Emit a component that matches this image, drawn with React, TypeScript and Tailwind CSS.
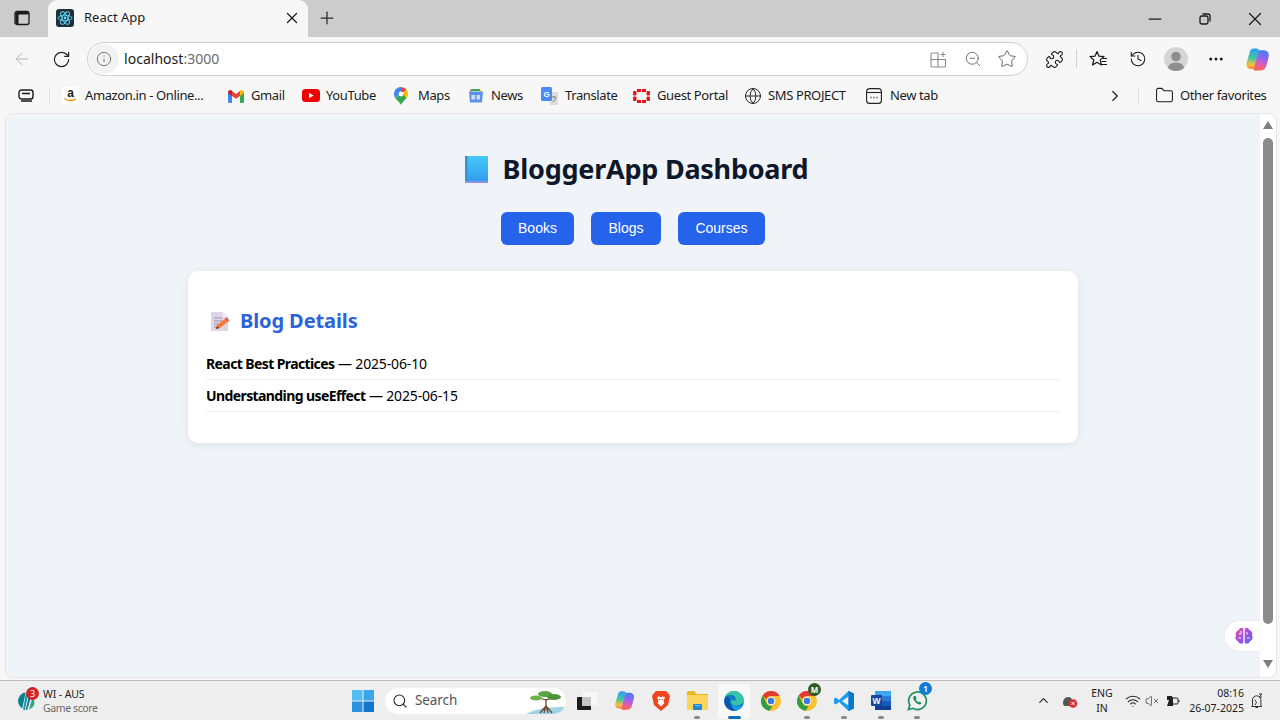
import { ChevronRight, ChevronUp, Folder, Globe, History, Info, Minus, MoreHorizontal, Plus, Puzzle, RotateCw, Search, Star, VolumeX, Wifi, X, ZoomOut, ArrowLeft } from 'lucide-react';
import type { ReactNode } from 'react';

const ui = "font-['Noto_Sans','Open_Sans',sans-serif]";

// ---- small logos, hand drawn
function ReactLogo() {
  return (
    <svg width="18" height="18" viewBox="0 0 18 18">
      <rect width="18" height="18" rx="3" fill="#20303a" />
      <g fill="none" stroke="#61dafb" strokeWidth="0.9">
        <ellipse cx="9" cy="9" rx="7" ry="2.8" />
        <ellipse cx="9" cy="9" rx="7" ry="2.8" transform="rotate(60 9 9)" />
        <ellipse cx="9" cy="9" rx="7" ry="2.8" transform="rotate(120 9 9)" />
      </g>
      <circle cx="9" cy="9" r="1.4" fill="#61dafb" />
    </svg>
  );
}

function AmazonIcon() {
  return (
    <svg width="17" height="17" viewBox="0 0 17 17">
      <rect width="17" height="17" rx="2" fill="#fff" />
      <text x="8.5" y="10" textAnchor="middle" fontSize="12" fontWeight="700" fontFamily="Liberation Sans" fill="#222">a</text>
      <path d="M2.5 11.5 Q8 15.5 14 11.8" stroke="#f59e0b" strokeWidth="1.5" fill="none" />
    </svg>
  );
}

function GmailIcon() {
  return (
    <svg width="16" height="14" viewBox="0 0 16 14">
      <path d="M0 3v9.5A1.5 1.5 0 0 0 1.5 14H4V6z" fill="#4285f4" />
      <path d="M16 3v9.5a1.5 1.5 0 0 1-1.5 1.5H12V6z" fill="#34a853" />
      <path d="M4 7 8 9.8 12 7V2L8 5 4 2z" fill="#ea4335" />
      <path d="M0 3.2C0 1 2.4.3 4 1.5V7L0 4z" fill="#c5221f" />
      <path d="M16 3.2C16 1 13.6.3 12 1.5V7l4-3z" fill="#fbbc04" />
    </svg>
  );
}

function YoutubeIcon() {
  return (
    <svg width="18" height="13" viewBox="0 0 18 13">
      <rect width="18" height="13" rx="3.5" fill="#f00000" />
      <path d="M7 3.8v5.4l4.6-2.7z" fill="#fff" />
    </svg>
  );
}

function MapsIcon() {
  return (
    <svg width="14" height="18" viewBox="0 0 14 18">
      <path d="M7 0a7 7 0 0 0-5.4 11.4L7 5z" fill="#4285f4" />
      <path d="M7 0a7 7 0 0 1 5.4 2.6L7 8z" fill="#ea4335" />
      <path d="M12.4 2.6A7 7 0 0 1 12.6 11L7 8z" fill="#fbbc04" />
      <path d="M1.6 11.4 7 5.5l5.6 5.5C10.5 13.5 8 15.5 7 18c-1-2.5-3.4-4.2-5.4-6.6z" fill="#34a853" />
      <circle cx="7" cy="7" r="2.4" fill="#fff" />
    </svg>
  );
}

function NewsIcon() {
  return (
    <svg width="16" height="15" viewBox="0 0 16 15">
      <path d="M3 3V1h9v2z" fill="#34a853" />
      <path d="M12 3V1.5l2 2z" fill="#fbbc04" />
      <path d="M3 3.500V1.500L1.500 3.500z" fill="#ea4335" />
      <path d="M1 3.5h14l-1 11H2z" fill="#5b92e8" />
      <rect x="3.5" y="7" width="3.5" height="4.5" fill="#fff" opacity="0.7" />
      <rect x="8.5" y="7" width="3.5" height="4.5" fill="#fff" opacity="0.7" />
    </svg>
  );
}

function TranslateIcon() {
  return (
    <svg width="17" height="18" viewBox="0 0 17 18">
      <path d="M7 5h9a1 1 0 0 1 1 1v11a1 1 0 0 1-1 1H9z" fill="#dcdcdc" />
      <rect width="11" height="14" rx="1.5" fill="#4c8bf5" />
      <text x="5.5" y="9.5" textAnchor="middle" fontSize="8" fontWeight="700" fontFamily="Liberation Sans" fill="#fff">G</text>
      <path d="M11 10h4M13 9v1M11.5 15c2-1 3-3 3-5" stroke="#777" strokeWidth="0.9" fill="none" />
    </svg>
  );
}

function GuestIcon() {
  return (
    <svg width="17" height="14" viewBox="0 0 17 14" fill="#e3161b">
      <rect x="4" y="0" width="4" height="3" />
      <rect x="9" y="0" width="4" height="3" />
      <rect x="4" y="11" width="4" height="3" />
      <rect x="9" y="11" width="4" height="3" />
      <rect x="0" y="2" width="3.500" height="4.500" rx="1" />
      <rect x="13.500" y="2" width="3.500" height="4.500" rx="1" />
      <rect x="0" y="7.500" width="3.500" height="4.500" rx="1" />
      <rect x="13.500" y="7.500" width="3.500" height="4.500" rx="1" />
    </svg>
  );
}

function NewTabIcon() {
  return (
    <svg width="16" height="16" viewBox="0 0 16 16" fill="none" stroke="#222" strokeWidth="1.1">
      <rect x="0.6" y="0.6" width="14.8" height="14.8" rx="3" />
      <path d="M1 4.5h14" />
      <path d="M4.5 9.5h1M7.5 9.5h1M10.5 9.5h1" strokeWidth="1.6" />
    </svg>
  );
}

function CopilotIcon({ size = 25, id }: { size?: number; id: string }) {
  return (
    <svg width={size} height={size} viewBox="0 0 24 24">
      <defs>
        <linearGradient id={`${id}L`} x1="0.5" y1="0" x2="0.4" y2="1">
          <stop offset="0" stopColor="#2f9df0" />
          <stop offset="0.45" stopColor="#3cc8a8" />
          <stop offset="0.8" stopColor="#f5c33b" />
          <stop offset="1" stopColor="#f58a3a" />
        </linearGradient>
        <linearGradient id={`${id}R`} x1="0.6" y1="0" x2="0.4" y2="1">
          <stop offset="0" stopColor="#3f7ff2" />
          <stop offset="0.45" stopColor="#a160ea" />
          <stop offset="0.8" stopColor="#ee5f95" />
          <stop offset="1" stopColor="#f4664a" />
        </linearGradient>
      </defs>
      <path d="M8.500 1.500C6 1.500 5 3 4.500 5L1.500 15C.6 18.500 3 21 6 21h2.500L13.500 4C13.800 2.600 12.500 1.500 11 1.500z" fill={`url(#${id}L)`} />
      <path d="M14.500 3h3.500c3.500 0 5.500 3 4.700 6.500L20.500 18c-.7 3-3 4.500-5.500 4.500H9.500c-1 0-1.500-.7-1.200-1.700L13 4.500c.2-.9.700-1.500 1.500-1.500z" fill={`url(#${id}R)`} />
    </svg>
  );
}

// tab window icon, top left
function TabsIcon() {
  return (
    <svg width="16" height="16" viewBox="0 0 16 16" fill="none" stroke="#1a1a1a">
      <rect x="1" y="1.500" width="14" height="13" rx="2" strokeWidth="1.300" />
      <path d="M1.500 3.500a1.500 1.500 0 0 1 1.500-1.500h10a1.500 1.500 0 0 1 1.500 1.500v1H4.500v9.500H3a1.500 1.500 0 0 1-1.500-1.500z" fill="#1a1a1a" stroke="none" />
    </svg>
  );
}

function AppsIcon() {
  return (
    <svg width="17" height="17" viewBox="0 0 17 17" fill="none" stroke="#8a8a8a" strokeWidth="1.100">
      <path d="M1 3.500A1.500 1.500 0 0 1 2.500 2H8v6.500H1zM8 8.500h7.500V15a1 1 0 0 1-1 1H8zM1 8.500h7V16H2.500A1.500 1.500 0 0 1 1 14.500z" />
      <path d="M13 1v5M10.500 3.500h5" />
    </svg>
  );
}

function FavListIcon() {
  return (
    <svg width="19" height="18" viewBox="0 0 19 18" fill="none" stroke="#1a1a1a" strokeWidth="1.200" strokeLinejoin="round">
      <path d="M8 1.500 10 6.200l5 .4-3.800 3.300 1.200 5L8 12.300 3.600 15l1.200-5L1 6.600l5-.4z" />
      <path d="M13 8.500h5M12.500 11.500h5M13 14.500h5" />
    </svg>
  );
}

function Avatar() {
  return (
    <div className="w-6 h-6 rounded-full bg-[#d5d5d5] overflow-hidden">
      <svg width="24" height="24" viewBox="0 0 24 24" fill="#8e8e8e">
        <circle cx="12" cy="9.500" r="4.800" />
        <ellipse cx="12" cy="21" rx="8" ry="5.500" />
      </svg>
    </div>
  );
}

// ---- page emoji
function BookEmoji() {
  return (
    <svg width="23" height="27" viewBox="0 0 23 27">
      <defs>
        <linearGradient id="bookBlue" x1="0" y1="0" x2="0" y2="1">
          <stop offset="0" stopColor="#45c8f2" />
          <stop offset="1" stopColor="#3399f0" />
        </linearGradient>
      </defs>
      <rect x="0" y="0" width="23" height="27" rx="1" fill="url(#bookBlue)" />
      <rect x="0" y="0" width="2.500" height="27" fill="#3d8fd0" />
      <rect x="0" y="25" width="23" height="2" fill="#8e93de" />
    </svg>
  );
}

function MemoEmoji() {
  return (
    <svg width="20" height="21" viewBox="0 0 20 21">
      <path d="M1 1h12l5 5v14H1z" fill="#ddd6e6" />
      <path d="M13 1l5 5h-5z" fill="#f3eef7" />
      <path d="M4 7h8M4 10h10M4 13h7M4 16h4" stroke="#9a92a8" strokeWidth="1" />
      <path d="M6 18l1-4 9-7 3 3-9 7z" fill="#f47b3f" />
      <path d="M6 18l1-3 2 2z" fill="#4a3a35" />
      <path d="M15 7.500l1.500-1.200 3 3-1.500 1.200z" fill="#e25560" />
    </svg>
  );
}

function BrainIcon() {
  return (
    <svg width="20" height="20" viewBox="0 0 20 20">
      <defs>
        <linearGradient id="brainFill" x1="0" y1="0" x2="1" y2="1">
          <stop offset="0" stopColor="#f0569a" />
          <stop offset="0.5" stopColor="#a24fe8" />
          <stop offset="1" stopColor="#4f6ef0" />
        </linearGradient>
      </defs>
      <path d="M9.300 2.500C7.500 1 5 2 5 4 2.500 4.500 1 7 2 9.500.700 11.500 1.500 14.500 4 15c.3 2.500 3.500 3.500 5.300 1.800zM10.700 2.500C12.500 1 15 2 15 4c2.500.5 4 3 3 5.500 1.300 2 .5 5-2 5.500-.3 2.500-3.500 3.500-5.300 1.800z" fill="url(#brainFill)" />
      <path d="M5 8h2.500M4.500 12H7M13 6v2.500M15.500 12H13M7 5v2" stroke="#fff" strokeWidth="1" fill="none" />
    </svg>
  );
}

// ---- taskbar icons
function WinLogo() {
  return (
    <svg width="22" height="22" viewBox="0 0 22 22">
      <rect x="0" y="0" width="10.500" height="10.500" fill="#52bdf2" />
      <rect x="11.500" y="0" width="10.500" height="10.500" fill="#3aa6ea" />
      <rect x="0" y="11.500" width="10.500" height="10.500" fill="#2a92e0" />
      <rect x="11.500" y="11.500" width="10.500" height="10.500" fill="#1277cc" />
    </svg>
  );
}

function TreeArt() {
  return (
    <svg width="40" height="24" viewBox="0 0 40 24">
      <path d="M0 24 Q14 16 40 17 L34 24z" fill="#9fd3e6" />
      <path d="M20 9v7M20 16l-6 7M20 16l6 7M20 15l-2 8M20 15l2 8M20 10l-7-2M20 10l7-2" stroke="#6b4a2f" strokeWidth="1.300" fill="none" />
      <ellipse cx="19" cy="4" rx="7" ry="3" fill="#5aa33f" />
      <ellipse cx="10" cy="8" rx="6" ry="2.500" fill="#6fb24a" />
      <ellipse cx="28" cy="7" rx="7" ry="3" fill="#4c9438" />
    </svg>
  );
}

function TaskViewIcon() {
  return (
    <svg width="22" height="20" viewBox="0 0 22 20">
      <rect x="7" y="1" width="14" height="13" rx="1" fill="#f8f8f8" />
      <rect x="1" y="6" width="14" height="13" rx="1" fill="#c4c4c4" />
      <path d="M1 7a1 1 0 0 1 1-1h4v9h9v4H2a1 1 0 0 1-1-1z" fill="#1c1c1c" />
    </svg>
  );
}

function BraveIcon() {
  return (
    <svg width="18" height="21" viewBox="0 0 18 21">
      <path d="M4 1h10l2 2 2 3-2 9-7 6-7-6-2-9 2-3z" fill="#f0441e" />
      <path d="M5 7l2.500-.5L9 7.500 10.500 6.500 13 7l-1.500 4 1 2L9 16.500 5.500 13l1-2z" fill="#fff" />
      <path d="M7 9.500h1.300M9.700 9.500H11" stroke="#f0441e" strokeWidth="1" />
    </svg>
  );
}

function ExplorerIcon() {
  return (
    <svg width="21" height="19" viewBox="0 0 21 19">
      <path d="M0 1.500A1.500 1.500 0 0 1 1.500 0h6l2 3H21v14H0z" fill="#e8b923" />
      <rect x="0" y="4" width="21" height="15" rx="1" fill="#fbd45c" />
      <rect x="6" y="13" width="9" height="6" rx="1" fill="#1e88d4" />
      <rect x="8" y="14" width="5" height="1.200" fill="#fff" opacity="0.4" />
    </svg>
  );
}

function EdgeIcon() {
  return (
    <svg width="20" height="20" viewBox="0 0 20 20">
      <circle cx="10" cy="10" r="10" fill="#0f7ec9" />
      <path d="M19.800 10.500C19.800 5 15.500 0 10 0 5 0 1.500 3.500.5 7c2-3 5.500-3.800 8-3 3 1 4 3.500 3 5.500H6.500c0 3 3 5 6 5 2.500 0 5-1 7.300-4z" fill="#36c5a6" />
      <path d="M6 9.500c-.5 4 2 9 8 9.300-2 1-4 1.300-6 .8C4 19 .5 15 .5 10c0-1 0-2 .5-3 2-2 4.500-1.500 5 2.500z" fill="#0a58a8" />
      <path d="M12 19.800c3.500-.8 6-3.300 7.300-6-2 1.500-5 2-7 1.500-1.500-.5-3-1.300-4-2.800-.5 3 1 6 3.700 7.300z" fill="#1e9be0" />
    </svg>
  );
}

function ChromeIcon() {
  return (
    <svg width="20" height="20" viewBox="0 0 20 20">
      <circle cx="10" cy="10" r="10" fill="#fbc02d" />
      <path d="M10 0a10 10 0 0 1 8.700 5H10a5 5 0 0 0-4.700 3.300L1.800 4.300A10 10 0 0 1 10 0z" fill="#e33b2e" />
      <path d="M1.800 4.300 5.700 12.500a5 5 0 0 0 6 2.200L8.300 19.900A10 10 0 0 1 1.800 4.300z" fill="#2f9e44" />
      <circle cx="10" cy="10" r="4.300" fill="#fff" />
      <circle cx="10" cy="10" r="3.300" fill="#3b78e7" />
    </svg>
  );
}

function VsCodeIcon() {
  return (
    <svg width="20" height="20" viewBox="0 0 20 20">
      <path d="M14.500 0 20 2.500v15L14.500 20 5 11l-3 2.500L0 12.300V7.700L2 6.500 5 9z" fill="#1f9cf0" />
      <path d="M14.500 5.500 8 10l6.500 4.500z" fill="#f0f0f0" />
      <path d="M14.500 0 20 2.500v15L14.500 20z" fill="#0a78c8" />
    </svg>
  );
}

function WordIcon() {
  return (
    <svg width="20" height="19" viewBox="0 0 20 19">
      <rect x="4" y="0" width="16" height="19" rx="1" fill="#2b7cd3" />
      <rect x="4" y="0" width="16" height="5" fill="#41a5ee" />
      <rect x="4" y="10" width="16" height="5" fill="#185abd" />
      <rect x="4" y="15" width="16" height="4" fill="#103f91" />
      <rect x="0" y="4" width="11" height="11" rx="1" fill="#124a9e" />
      <text x="5.500" y="12.500" textAnchor="middle" fontSize="8.500" fontWeight="700" fontFamily="Liberation Sans" fill="#fff">W</text>
    </svg>
  );
}

function WhatsappIcon() {
  return (
    <svg width="21" height="21" viewBox="0 0 21 21" fill="none">
      <path d="M1.500 19.500l1.300-4.500A8.800 8.800 0 1 1 6 18.300z" stroke="#1f8f5f" strokeWidth="1.700" fill="#f0f0f0" />
      <path d="M7 6c-1 1-1 2.500 0 4.300 1 1.800 2.800 3.500 4.700 4 1.300.3 2.400-.2 3-1.300l-2.200-1.500-1 .8c-1-.4-2.200-1.600-2.700-2.800l.9-1L8.500 6z" fill="#1f8f5f" />
    </svg>
  );
}

function CricketIcon() {
  return (
    <svg width="17" height="20" viewBox="0 0 20 25" preserveAspectRatio="none">
      <path d="M0 12C1 6 5 2 9 2L5 22C2 20 0 16 0 12z" fill="#0d7f8f" />
      <path d="M9 4h3L8 24 6 23z" fill="#12a0a6" />
      <path d="M13 5h3l-5 18-2 1z" fill="#1a6fa8" />
      <path d="M17 8c2 3 3 6 2 9-1 3-3 5-6 6z" fill="#2aa878" />
    </svg>
  );
}

function TrayCloud() {
  return (
    <svg width="16" height="14" viewBox="0 0 16 14">
      <path d="M1 9c0-3 2-6 5-6 2 0 4 1 4 3l2 2-2 4H3C2 12 1 11 1 9z" fill="#555" />
      <circle cx="11" cy="9.500" r="4.300" fill="#e0303a" />
      <path d="M9.500 8l3 3M12.500 8l-3 3" stroke="#fff" strokeWidth="1" />
    </svg>
  );
}

function TrayBattery() {
  return (
    <svg width="16" height="14" viewBox="0 0 16 14" fill="#222">
      <path d="M3 2h5v1h1v9H3z" />
      <path d="M9 4h4a1 1 0 0 1 1 1v4a1 1 0 0 1-1 1H9" stroke="#222" fill="none" />
      <path d="M14.500 6h1v2h-1z" />
      <path d="M1 6h4L3 12z" fill="#eee" />
    </svg>
  );
}

function TrayBell() {
  return (
    <svg width="16" height="16" viewBox="0 0 16 16" fill="none" stroke="#333" strokeWidth="1">
      <path d="M3.500 12.500V7a4.200 4.200 0 0 1 8.400 0v5.500l1.100 1H2.500z" />
      <path d="M6.500 14.500h2.500M6 7l1.500 2.500L6 12M10 1h3l-3 3h3" />
    </svg>
  );
}

const bookmarks: { icon: ReactNode; label: string; box: string; icoBox: string }[] = [
  { icon: <AmazonIcon />, label: 'Amazon.in - Online...', box: 'w-[166px]', icoBox: 'w-[23px]' },
  { icon: <GmailIcon />, label: 'Gmail', box: 'w-[74px]', icoBox: 'w-[23px]' },
  { icon: <YoutubeIcon />, label: 'YouTube', box: 'w-[92px]', icoBox: 'w-[24px]' },
  { icon: <MapsIcon />, label: 'Maps', box: 'w-[74px]', icoBox: 'w-[24px]' },
  { icon: <NewsIcon />, label: 'News', box: 'w-[73px]', icoBox: 'w-[23px]' },
  { icon: <TranslateIcon />, label: 'Translate', box: 'w-[92px]', icoBox: 'w-[24px]' },
  { icon: <GuestIcon />, label: 'Guest Portal', box: 'w-[111px]', icoBox: 'w-[24px]' },
  { icon: <Globe size={18} strokeWidth={1.3} color="#222" />, label: 'SMS PROJECT', box: 'w-[122px]', icoBox: 'w-[24px]' },
  { icon: <NewTabIcon />, label: 'New tab', box: 'w-[100px]', icoBox: 'w-[24px]' },
];

const taskIcons: { icon: ReactNode; key: string; running?: boolean; active?: boolean; badge?: ReactNode }[] = [
  { key: 'view', icon: <TaskViewIcon /> },
  { key: 'copilot', icon: <CopilotIcon size={21} id="copilotTask" /> },
  { key: 'brave', icon: <BraveIcon /> },
  { key: 'files', icon: <ExplorerIcon />, running: true },
  { key: 'edge', icon: <EdgeIcon />, active: true },
  { key: 'chrome', icon: <ChromeIcon /> },
  {
    key: 'chrome2',
    icon: <ChromeIcon />,
    running: true,
    badge: <span className="absolute top-[2px] left-[19px] w-[13px] h-[13px] rounded-full bg-[#2c5c22] text-white text-[8px] leading-[13px] text-center font-bold">M</span>,
  },
  { key: 'code', icon: <VsCodeIcon />, running: true },
  { key: 'word', icon: <WordIcon />, running: true },
  {
    key: 'whatsapp',
    icon: <WhatsappIcon />,
    running: true,
    badge: <span className="absolute top-[1px] left-[20px] w-[13px] h-[13px] rounded-full bg-[#0f7cd6] text-white text-[9px] leading-[13px] text-center font-semibold">1</span>,
  },
];

function TitleBar() {
  return (
    <div className="h-[37px] bg-[#cccccc] flex items-center shrink-0">
      <div className="w-[48px] flex justify-center pr-[4px] mb-[2px]">
        <TabsIcon />
      </div>
      <div className="w-[260px] h-[37px] bg-[#f7f7f7] rounded-t-[9px] flex items-center pl-[8px] pr-[7px] pb-[1px]">
        <ReactLogo />
        <span className="ml-[10px] text-[13px] text-[#1c1c1c] flex-1">React App</span>
        <X size={18} strokeWidth={1.7} color="#1a1a1a" />
      </div>
      <div className="ml-[9px] mb-[2px]">
        <Plus size={20} strokeWidth={1.5} color="#2a2a2a" />
      </div>
      <div className="ml-auto flex items-center">
        <div className="w-[50px] flex justify-center"><Minus size={20} strokeWidth={1.5} color="#1a1a1a" /></div>
        <div className="w-[50px] flex justify-center">
          <svg width="12" height="12" viewBox="0 0 12 12" fill="none" stroke="#1a1a1a" strokeWidth="1.300">
            <rect x="1" y="3" width="8" height="8" rx="1.800" />
            <path d="M3.500 1H9a2 2 0 0 1 2 2v5.500" />
          </svg>
        </div>
        <div className="w-[50px] flex justify-center"><X size={22} strokeWidth={1.4} color="#1a1a1a" /></div>
      </div>
    </div>
  );
}

function AddressBar() {
  return (
    <div className="h-[41px] pt-[3px] bg-[#f7f7f7] flex items-center shrink-0">
      <div className="w-[43px] flex justify-center pl-[1px]">
        <ArrowLeft size={20} strokeWidth={1.2} color="#b5b5b5" />
      </div>
      <div className="w-[36px] flex justify-center">
        <RotateCw size={19} strokeWidth={1.5} color="#222" />
      </div>
      <div className="ml-[8px] w-[941px] h-[34px] bg-white border border-[#cfcfcf] rounded-full flex items-center pl-[1px] pr-[10px]">
        <div className="w-[30px] h-[30px] rounded-full bg-[#f2f2f2] flex items-center justify-center">
          <Info size={16} strokeWidth={1.3} color="#666" />
        </div>
        <span className="ml-[5px] mb-[2px] text-[14px] text-[#1a1a1a] flex-1 tracking-[0.03px]">
          localhost<span className="text-[#6b6b6b]">:3000</span>
        </span>
        <AppsIcon />
        <div className="ml-[17px]"><ZoomOut size={18} strokeWidth={1.2} color="#666" /></div>
        <div className="ml-[15px]"><Star size={20} strokeWidth={1.2} color="#666" /></div>
      </div>
      <div className="ml-[17px]"><Puzzle size={19} strokeWidth={1.4} color="#1a1a1a" /></div>
      <div className="ml-[12px] w-px h-[18px] bg-[#d0d0d0]" />
      <div className="ml-[12px]"><FavListIcon /></div>
      <div className="ml-[21px]"><History size={18} strokeWidth={1.4} color="#1a1a1a" /></div>
      <div className="ml-[17px]"><Avatar /></div>
      <div className="ml-[19px]"><MoreHorizontal size={18} strokeWidth={2} color="#1a1a1a" /></div>
      <div className="ml-[20px]"><CopilotIcon id="copilotTop" /></div>
    </div>
  );
}

function BookmarksBar() {
  return (
    <div className="h-[35px] bg-[#f7f7f7] flex items-center shrink-0 text-[13px] text-[#1c1c1c] tracking-[-0.38px]">
      <div className="w-[49px] pl-[18px] flex items-center">
        <svg width="17" height="13" viewBox="0 0 17 13" fill="none" stroke="#1a1a1a" strokeWidth="1.400">
          <rect x="1" y="1" width="14" height="9" rx="2.500" />
          <path d="M4 4.500h8M3 12h11" />
        </svg>
      </div>
      <div className="w-px h-[18px] bg-[#dedede] mr-[12px]" />
      {bookmarks.map((b) => (
        <div key={b.label} className={`${b.box} flex items-center shrink-0`}>
          <div className={`${b.icoBox} flex items-center shrink-0`}>{b.icon}</div>
          <span className="whitespace-nowrap">{b.label}</span>
        </div>
      ))}
      <div className="ml-[140px]"><ChevronRight size={18} strokeWidth={1.5} color="#1a1a1a" /></div>
      <div className="ml-[14px] w-px h-[18px] bg-[#dedede]" />
      <div className="ml-[16px]"><Folder size={19} strokeWidth={1.3} color="#1a1a1a" /></div>
      <span className="ml-[6px] whitespace-nowrap">Other favorites</span>
    </div>
  );
}

function Scrollbar() {
  return (
    <div className="w-[16px] bg-white flex flex-col items-center shrink-0 rounded-r-[8px]">
      <div className="mt-[7px] w-0 h-0 border-l-[5px] border-r-[5px] border-b-[8px] border-l-transparent border-r-transparent border-b-[#7e7e7e]" />
      <div className="mt-[9px] w-[10px] h-[486px] rounded-full bg-[#8b8b8b]" />
      <div className="mt-auto mb-[9px] w-0 h-0 border-l-[5px] border-r-[5px] border-t-[8px] border-l-transparent border-r-transparent border-t-[#7e7e7e]" />
    </div>
  );
}

function Dashboard() {
  return (
    <div className="flex-1 bg-[#f0f4f8] relative rounded-l-[8px]">
      <div className="pt-[35px] flex flex-col items-center">
        <h1 className="h-[40px] pl-[7px] flex items-center text-[27px] font-bold text-[#0f172a] tracking-[-0.25px]">
          <BookEmoji />
          <span className="ml-[15px]">BloggerApp Dashboard</span>
        </h1>
        <div className="mt-[23px] flex gap-[17px] font-['Liberation_Sans',Arial,sans-serif] text-[14px] text-white">
          <button className="w-[73px] h-[33px] bg-[#2563eb] rounded-[6px]">Books</button>
          <button className="w-[70px] h-[33px] bg-[#2563eb] rounded-[6px]">Blogs</button>
          <button className="w-[87px] h-[33px] bg-[#2563eb] rounded-[6px]">Courses</button>
        </div>
        <div className="mt-[26px] w-[890px] h-[172px] bg-white rounded-[10px] shadow-[0_2px_8px_rgba(0,0,0,0.08)] px-[18px] pt-[36px]">
          <h2 className="flex items-center h-[28px] text-[20px] font-bold text-[#2b63dc] tracking-[-0.1px]">
            <span className="ml-[4px] mr-[10px] flex"><MemoEmoji /></span>
            Blog Details
          </h2>
          <ul className="mt-[15px] text-[14px] text-black tracking-[-0.15px]">
            <li className="h-[30px] pt-[1px] leading-[26px] border-b border-[#f0f0f0]">
              <strong className="font-bold tracking-[-0.6px]">React Best Practices</strong> — 2025-06-10
            </li>
            <li className="h-[32px] leading-[32px] border-b border-[#f0f0f0]">
              <strong className="font-bold tracking-[-0.6px]">Understanding useEffect</strong> — 2025-06-15
            </li>
          </ul>
        </div>
      </div>
      <div className="absolute right-0 top-[507px] w-[35px] h-[30px] bg-white rounded-l-full flex items-center justify-center pl-[2px] shadow-[0_0_4px_rgba(0,0,0,0.05)]">
        <BrainIcon />
      </div>
    </div>
  );
}

function Taskbar() {
  return (
    <div className="h-[40px] bg-[#eeeeee] border-t border-[#bdbdbd] flex items-center shrink-0">
      <div className="w-[352px] pl-[18px] flex items-center relative">
        <CricketIcon />
        <span className="absolute left-[26px] top-0 w-[13px] h-[13px] rounded-full bg-[#d32424] text-white text-[9px] leading-[13px] text-center">3</span>
        <div className="ml-[8px] text-[10.5px] leading-[14px] text-[#1c1c1c] tracking-[-0.1px]">
          <div>WI - AUS</div>
          <div className="text-[#6a6a6a] tracking-[-0.4px]">Game score</div>
        </div>
      </div>
      <WinLogo />
      <div className="ml-[11px] w-[181px] h-[26px] bg-white rounded-full flex items-center pl-[7px] relative overflow-hidden shrink-0">
        <Search size={16} strokeWidth={1.6} color="#222" />
        <span className="ml-[7px] text-[13.5px] text-[#555] tracking-[-0.1px]">Search</span>
        <div className="absolute right-0 bottom-0 flex"><TreeArt /></div>
      </div>
      <div className="ml-[3px] flex items-center">
        {taskIcons.map((t) => (
          <div key={t.key} className="relative w-[36.7px] h-[39px] flex items-center justify-center shrink-0">
            {t.active && <span className="absolute left-[2px] top-[3px] bottom-[1px] w-[32px] rounded-[4px] bg-[#f8f8f8]" />}
            <span className="relative flex">{t.icon}</span>
            {t.badge}
            {t.running && <span className="absolute bottom-[1px] left-[15px] w-[6px] h-[3px] rounded-full bg-[#8a8a8a]" />}
            {t.active && <span className="absolute bottom-[1px] left-[12px] w-[13px] h-[3px] rounded-full bg-[#0f6cbd]" />}
          </div>
        ))}
      </div>
      <div className="ml-auto flex items-center pr-[15px]">
        <ChevronUp size={15} strokeWidth={1.8} color="#222" />
        <div className="ml-[11px]"><TrayCloud /></div>
        <div className="ml-[9px] w-[30px] text-center text-[10.5px] leading-[15px] text-[#1c1c1c]">
          <div>ENG</div>
          <div>IN</div>
        </div>
        <div className="ml-[8px]"><Wifi size={16} strokeWidth={1.6} color="#222" /></div>
        <div className="ml-[4px]"><VolumeX size={14} strokeWidth={1.2} color="#333" /></div>
        <div className="ml-[5px]"><TrayBattery /></div>
        <div className="ml-[9px] w-[55px] text-right text-[10.5px] leading-[15px] text-[#1c1c1c]">
          <div>08:16</div>
          <div>26-07-2025</div>
        </div>
        <div className="ml-[5px]"><TrayBell /></div>
      </div>
    </div>
  );
}

export default function App() {
  return (
    <div className={`w-[1280px] h-[720px] overflow-hidden flex flex-col bg-[#f7f7f7] ${ui}`}>
      <TitleBar />
      <AddressBar />
      <BookmarksBar />
      <div className="flex-1 min-h-0 pl-[5px] pr-[3px] pb-[2px] flex">
        <div className="flex-1 flex rounded-[8px] border border-[#e4e4e4] overflow-hidden">
          <Dashboard />
          <Scrollbar />
        </div>
      </div>
      <Taskbar />
    </div>
  );
}
